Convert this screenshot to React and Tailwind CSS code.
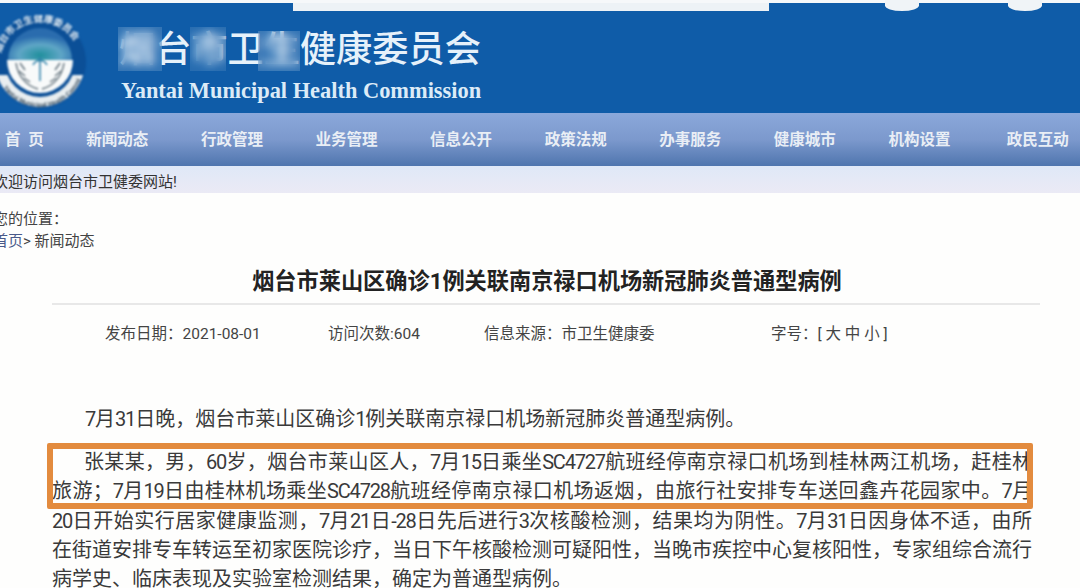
const NAV = ['新闻动态', '行政管理', '业务管理', '信息公开', '政策法规', '办事服务', '健康城市', '机构设置'];

const BODY_LINES = [
  '张某某，男，60岁，烟台市莱山区人，7月15日乘坐SC4727航班经停南京禄口机场到桂林两江机场，赶桂林',
  '旅游；7月19日由桂林机场乘坐SC4728航班经停南京禄口机场返烟，由旅行社安排专车送回鑫卉花园家中。7月',
  '20日开始实行居家健康监测，7月21日-28日先后进行3次核酸检测，结果均为阴性。7月31日因身体不适，由所',
  '在街道安排专车转运至初家医院诊疗，当日下午核酸检测可疑阳性，当晚市疾控中心复核阳性，专家组综合流行',
  '病学史、临床表现及实验室检测结果，确定为普通型病例。',
];

// the source font has narrow digits, so latin runs get pulled together
function Tight({ text }) {
  return text.split(/([0-9A-Z-]+)/).map((part, i) =>
    i % 2 === 1 ? <span key={i} className="tracking-[-1.2px]">{part}</span> : part
  );
}

function Emblem() {
  return (
    <svg width="100" height="100" viewBox="0 0 100 100" className="absolute left-[-6px] top-[4px] blur-[0.8px]">
      <defs>
        <path id="topArc" d="M6 47 A40 40 0 0 1 86 47" />
        <path id="bottomArc" d="M5 64 A44 44 0 0 0 87 64" />
        <clipPath id="lower"><rect x="0" y="60" width="100" height="40" /></clipPath>
        <radialGradient id="teal" cx="0.5" cy="0.85" r="0.6">
          <stop offset="0" stopColor="#1f8f9c" />
          <stop offset="0.55" stopColor="#5fa6c6" />
          <stop offset="1" stopColor="#2a6cae" />
        </radialGradient>
      </defs>
      <circle cx="46" cy="47" r="46" fill="#0b4f97" />
      <circle cx="46" cy="47" r="45" fill="#e9eef0" clipPath="url(#lower)" />
      <circle cx="46" cy="47" r="35" fill="#0b4f97" />
      <path d="M14 45 A32 32 0 0 1 78 45 Z" fill="url(#teal)" />
      <path d="M13 45 H79 A33 33 0 0 1 13 45 Z" fill="#f8fafa" />
      <g fill="none" stroke="#66757f" strokeWidth="1.5">
        <path d="M22 48 C24 62 33 71 44 74" />
        <path d="M70 48 C68 62 59 71 48 74" />
        <path d="M26 48 l5 7 M25 56 l6 5 M30 63 l6 4 M66 48 l-5 7 M67 56 l-6 5 M62 63 l-6 4" />
        <path d="M46 42 V66" stroke="#2c7fa8" />
        <path d="M39 50 C42 44 50 44 53 50" stroke="#2c7fa8" />
      </g>
      <text fontSize="9.5" fill="#dfeaf2" fontFamily="'Noto Sans CJK SC', sans-serif" fontWeight="700">
        <textPath href="#topArc" startOffset="7%">烟台市卫生健康委员会</textPath>
      </text>
      <text fontSize="6.4" fill="#33485a" fontWeight="700" fontFamily="'Liberation Sans', sans-serif">
        <textPath href="#bottomArc" startOffset="9%">Yantai Municipal Health Commission</textPath>
      </text>
    </svg>
  );
}

export default function App() {
  return (
    <div className="relative w-[1080px] h-[588px] overflow-hidden bg-[#fefefd] blur-[0.6px] [font-family:Roboto,'Noto_Sans_CJK_SC',sans-serif]">
      {/* top edge of the banner, cut out by the browser chrome */}
      <div className="flex h-[11px]">
        <div className="w-[293px] border-t-[3px] border-[#f6f8fa] bg-[#0f5ca8]"></div>
        <div className="flex-1 border-t-[3px] border-[#f6f8fa] bg-[#edf2f6]"></div>
        <div className="relative w-[311px] border-t-[3px] border-[#f6f8fa] bg-[#0f5ca8]">
          <div className="absolute left-[116px] top-[-3px] w-[34px] h-[11px] rounded-b-[50%] bg-[#f0f4f7]"></div>
          <div className="absolute left-[239px] top-[-3px] w-[34px] h-[11px] rounded-b-[50%] bg-[#f0f4f7]"></div>
        </div>
      </div>

      <header className="relative h-[102px] bg-[#0f5ca8] pl-[119px] pt-[17px]">
        <Emblem />
        <h1 className="text-[36.2px] leading-[44px] font-medium text-[#e6f1fa] whitespace-nowrap">烟台市卫生健康委员会</h1>
        <p className="mt-[6px] pl-[2px] font-['Liberation_Serif',serif] text-[22.4px] leading-[26px] font-bold text-[#dcebf7] whitespace-nowrap">Yantai Municipal Health Commission</p>
        {/* smudged part of the name */}
        <div className="absolute left-[118px] top-[16px] w-[44px] h-[44px] bg-white/15 backdrop-blur-[4px]"></div>
        <div className="absolute left-[190px] top-[16px] w-[36px] h-[44px] bg-white/10 backdrop-blur-[5px]"></div>
        <div className="absolute left-[258px] top-[20px] w-[42px] h-[40px] bg-white/15 backdrop-blur-[4px]"></div>
      </header>

      <nav className="flex items-center h-[53px] pt-[2px] bg-gradient-to-b from-[#8ba8da] via-[#7c99cd] to-[#4f75ae] text-[15.5px] font-bold text-[#e9eef5] whitespace-nowrap">
        <div className="w-[60px] shrink-0 pl-[5px]">首&nbsp;&nbsp;页</div>
        {NAV.map((label) => (
          <div key={label} className="w-[114.6px] shrink-0 text-center">{label}</div>
        ))}
        <div className="w-[122px] shrink-0 text-center">政民互动</div>
      </nav>

      <div className="flex items-center h-[27px] pt-[5px] bg-gradient-to-b from-[#dfe8f7] to-[#ebeaf5] text-[15px] text-[#333] whitespace-nowrap">
        <span className="ml-[-7px]">欢迎访问烟台市卫健委网站!</span>
      </div>

      <div className="ml-[-7px] mt-[15px] text-[15px] leading-[22px] text-[#444] whitespace-nowrap">
        <p>您的位置：</p>
        <p><span className="text-[#4a5a8a]">首页</span>&gt; 新闻动态</p>
      </div>

      <h2 className="mt-[13px] pl-[14px] text-center text-[22.2px] leading-[32px] font-bold text-[#222] whitespace-nowrap">烟台市莱山区确诊1例关联南京禄口机场新冠肺炎普通型病例</h2>
      <div className="mt-[6px] ml-[52px] w-[988px] h-[2px] bg-[#e8e8e8]"></div>

      <div className="flex mt-[19px] h-[22px] items-center text-[15.5px] text-[#444] whitespace-nowrap">
        <span className="ml-[105px] w-[223px]">发布日期：2021-08-01</span>
        <span className="w-[156px]">访问次数:604</span>
        <span className="w-[287px]">信息来源：市卫生健康委</span>
        <span>字号：[ 大 中 小 ]</span>
      </div>

      <p className="mt-[58px] pl-[85px] text-[20px] leading-[30px] text-[#3a3a3a] whitespace-nowrap"><Tight text="7月31日晚，烟台市莱山区确诊1例关联南京禄口机场新冠肺炎普通型病例。" /></p>

      <div className="mt-[14px] ml-[52px] w-[980px] text-[20px] leading-[29.3px] text-[#3a3a3a]">
        {BODY_LINES.map((line, i) => (
          <p key={i} className={`text-justify ${i === 0 ? 'pl-[32px]' : ''} ${i < 4 ? '[text-align-last:justify]' : ''}`}>
            <Tight text={line} />
          </p>
        ))}
      </div>

      {/* orange annotation drawn over the text */}
      <div className="absolute left-[47px] top-[443px] w-[986px] h-[66px] border-[6px] border-[#e38b3e] rounded-[2px] blur-[0.5px]"></div>
    </div>
  );
}
